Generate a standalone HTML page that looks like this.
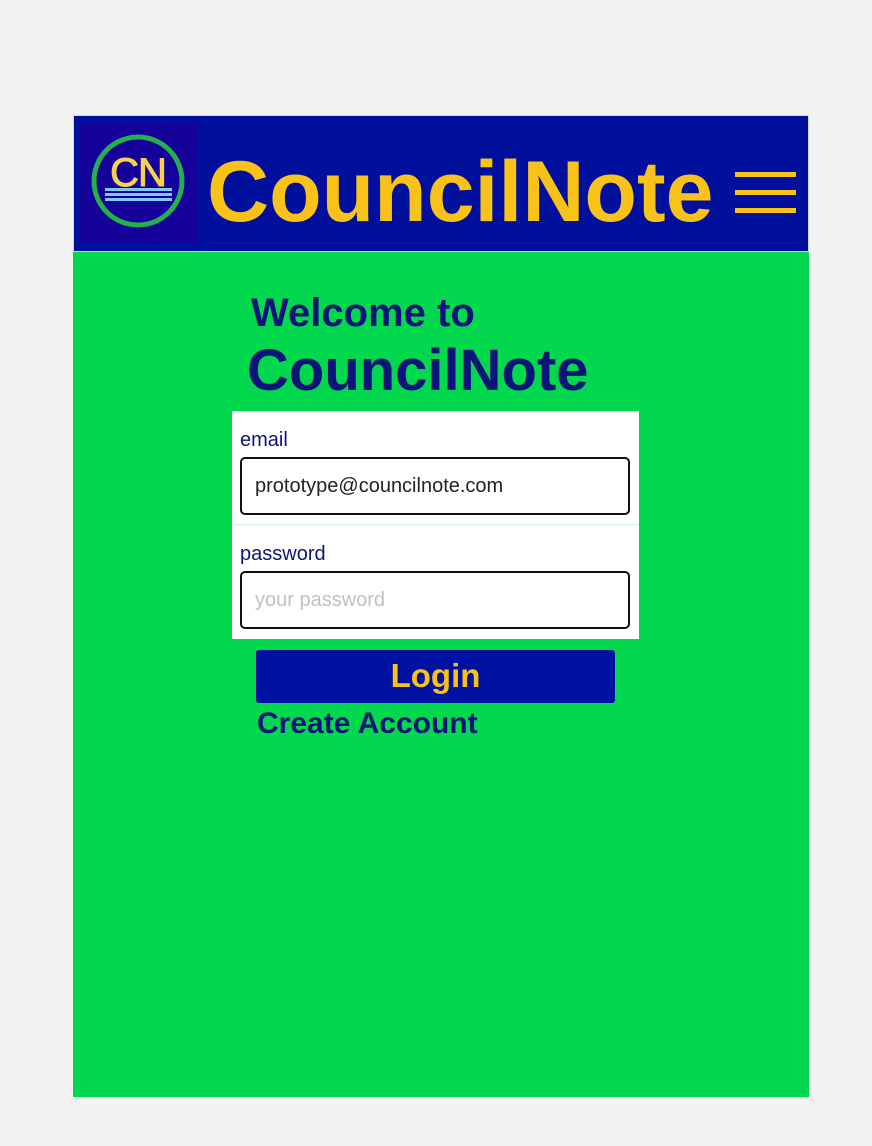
<!DOCTYPE html>
<html><head><meta charset="utf-8"><style>
*{margin:0;padding:0;box-sizing:border-box}
body{width:872px;height:1146px;background:#f2f2f2;position:relative;overflow:hidden;font-family:"Liberation Sans",sans-serif}
.a{position:absolute;white-space:nowrap}
.card{left:73px;top:115px;width:736px;height:982px;background:#02d84e}
.hdr{left:73px;top:115px;width:736px;height:137px;background:#000f9c;border:1px solid #c8d8e8}
.logo{left:80px;top:123px;width:117px;height:120px;background:#16009a}
.b{font-weight:bold}
.navy{color:#0b1478}
.inp{background:#fff;border:2px solid #111;border-radius:5px;font-size:20px;padding-left:13px;line-height:55px}
</style></head><body>
<div class="a card"></div>
<div class="a hdr"></div>
<div class="a logo"></div>
<svg class="a" style="left:80px;top:123px" width="117" height="120">
<circle cx="58" cy="58" r="44" fill="none" stroke="#22b14c" stroke-width="5"/>
<text x="58" y="63" text-anchor="middle" font-family="Liberation Sans,sans-serif" font-size="40" fill="#f8d050" stroke="#f8d050" stroke-width="1" letter-spacing="-1">CN</text>
<rect x="25" y="65" width="67" height="3" fill="#7fc8ff"/>
<rect x="25" y="70" width="67" height="3" fill="#7fc8ff"/>
<rect x="25" y="75" width="67" height="3" fill="#7fc8ff"/>
</svg>
<div class="a b" style="left:207px;top:142px;font-size:86px;line-height:100px;color:#f8c218">CouncilNote</div>
<div class="a" style="left:735px;top:172px;width:61px;height:5px;background:#f8c218"></div>
<div class="a" style="left:735px;top:190px;width:61px;height:5px;background:#f8c218"></div>
<div class="a" style="left:735px;top:208px;width:61px;height:5px;background:#f8c218"></div>

<div class="a b navy" style="left:251px;top:290px;font-size:40px;line-height:46px">Welcome to</div>
<div class="a b navy" style="left:247px;top:337px;font-size:58px;line-height:68px">CouncilNote</div>

<div class="a" style="left:232px;top:411px;width:407px;height:228px;background:#fff"></div>
<div class="a navy" style="left:240px;top:428px;font-size:20px;line-height:24px">email</div>
<div class="a inp" style="left:240px;top:457px;width:390px;height:58px;color:#222">prototype@councilnote.com</div>
<div class="a" style="left:232px;top:524px;width:407px;height:1px;background:#d0eee0"></div>
<div class="a navy" style="left:240px;top:542px;font-size:20px;line-height:24px">password</div>
<div class="a inp" style="left:240px;top:571px;width:390px;height:58px;color:#c0c0c0">your password</div>

<div class="a" style="left:256px;top:650px;width:359px;height:53px;background:#0010a0;border-radius:3px"></div>
<div class="a b" style="left:256px;top:656px;width:359px;text-align:center;font-size:33px;line-height:40px;color:#f8c218">Login</div>
<div class="a b navy" style="left:257px;top:706px;font-size:30px;line-height:36px">Create Account</div>
</body></html>
